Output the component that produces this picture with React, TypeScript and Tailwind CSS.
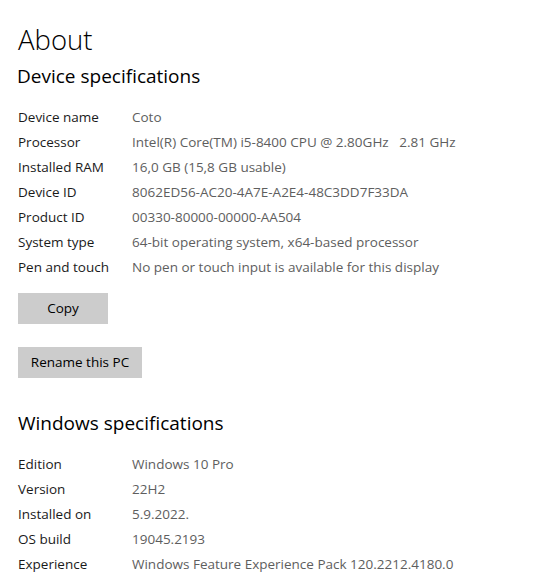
const device: [string, string][] = [
  ['Device name', 'Coto'],
  ['Processor', 'Intel(R) Core(TM) i5-8400 CPU @ 2.80GHz\u00a0\u00a0\u00a02.81 GHz'],
  ['Installed RAM', '16,0 GB (15,8 GB usable)'],
  ['Device ID', '8062ED56-AC20-4A7E-A2E4-48C3DD7F33DA'],
  ['Product ID', '00330-80000-00000-AA504'],
  ['System type', '64-bit operating system, x64-based processor'],
  ['Pen and touch', 'No pen or touch input is available for this display'],
];

const windows: [string, string][] = [
  ['Edition', 'Windows 10 Pro'],
  ['Version', '22H2'],
  ['Installed on', '5.9.2022.'],
  ['OS build', '19045.2193'],
  ['Experience', 'Windows Feature Experience Pack 120.2212.4180.0'],
];

function SpecRows({ rows }: { rows: [string, string][] }) {
  return (
    <div className="flex flex-col">
      {rows.map(([label, value]) => (
        <div key={label} className="flex h-[25px] items-center text-[13.5px]">
          <span className="w-[114px] shrink-0 text-[#1a1a1a]">{label}</span>
          <span className="whitespace-nowrap text-[#5e5e5e]">{value}</span>
        </div>
      ))}
    </div>
  );
}

export default function App() {
  return (
    <div
      className="h-[586px] w-[547px] overflow-hidden bg-white pl-[18px] text-black"
      style={{ fontFamily: "'Open Sans', 'Noto Sans', sans-serif" }}
    >
      <h1 className="pt-[22px] text-[27.5px] font-light leading-[36px]">About</h1>
      <h2 className="mt-[4px] text-[19px] leading-[28px] -ml-[1px]">Device specifications</h2>

      <div className="mt-[15px]">
        <SpecRows rows={device} />
      </div>

      <div className="mt-[13px] flex flex-col items-start gap-[23px]">
        <button className="h-[31px] w-[90px] bg-[#cccccc] text-[13.5px] text-black">Copy</button>
        <button className="h-[31px] w-[124px] bg-[#cccccc] text-[13.5px] text-black">Rename this PC</button>
      </div>

      <h2 className="mt-[31px] text-[19px] leading-[28px]">Windows specifications</h2>

      <div className="mt-[15px]">
        <SpecRows rows={windows} />
      </div>
    </div>
  );
}
